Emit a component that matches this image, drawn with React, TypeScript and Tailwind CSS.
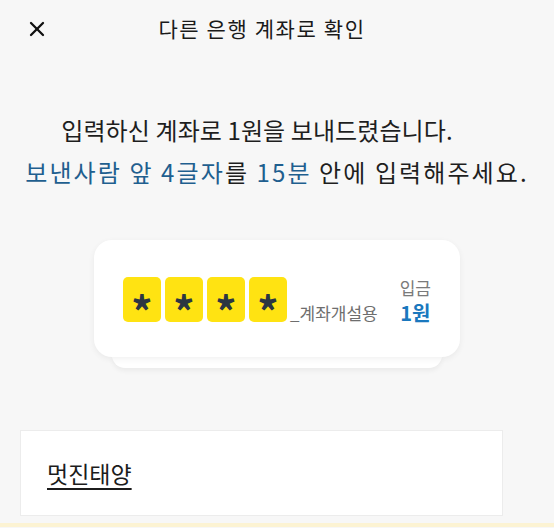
import { X } from "lucide-react";

const font = { fontFamily: '"Noto Sans CJK KR", "Noto Sans", sans-serif' };

const CodeBox = () => (
  <div className="w-[38px] h-[45px] rounded-[5px] bg-[#ffe312] flex items-center justify-center">
    <span className="block h-[24px] text-[42px] font-bold text-[#2c3642] leading-[44px]">*</span>
  </div>
);

export default function App() {
  return (
    <div className="w-[554px] h-[528px] overflow-hidden bg-[#f7f7f7] flex flex-col" style={font}>
      <header className="h-[58px] flex items-center pl-[25px] pr-[55px]">
        <button className="w-[24px] h-[24px] flex items-center justify-center text-[#111]">
          <X className="w-[26px] h-[26px]" strokeWidth={2.3} />
        </button>
        <h1 className="flex-1 text-center text-[21px] text-[#1a1a1a] tracking-[1.6px]">다른 은행 계좌로 확인</h1>
        <div className="w-[24px]" />
      </header>

      <div className="pt-[51px] text-center text-[24px] leading-[42px] text-[#1e1e1e]">
        <p className="tracking-[0.1px] pr-[40px]">입력하신 계좌로 1원을 보내드렸습니다.</p>
        <p className="tracking-[2.1px]">
          <span className="text-[#1f5f8f]">보낸사람 앞 4글자</span>를{" "}
          <span className="text-[#1f5f8f]">15분</span> 안에 입력해주세요.
        </p>
      </div>

      <div className="mt-[47px] w-[366px] mx-auto">
        <div className="relative z-10 h-[117px] rounded-[18px] bg-white shadow-[0_2px_6px_rgba(0,0,0,0.06)] flex items-center justify-between pl-[29px] pr-[29px]">
          <div className="flex items-end gap-[3px] mt-[2px]">
            <div className="flex gap-[4px]">
              <CodeBox />
              <CodeBox />
              <CodeBox />
              <CodeBox />
            </div>
            <span className="text-[17px] text-[#6e6e6e] leading-none mb-[1px]">_계좌개설용</span>
          </div>
          <div className="flex flex-col items-center mt-[4px]">
            <span className="text-[17px] text-[#7a7a7a] leading-[24px]">입금</span>
            <span className="text-[20px] font-bold text-[#1a78be] leading-[26px]">1원</span>
          </div>
        </div>
        <div className="mx-[18px] h-[13px] -mt-[2px] rounded-b-[14px] bg-white shadow-[0_3px_5px_rgba(0,0,0,0.05)]" />
      </div>

      <div className="mt-[62px] ml-[20px] w-[483px] h-[86px] bg-white border border-[#ececec] flex items-center pl-[26px]">
        <span className="text-[23px] text-[#1c1c1c] underline underline-offset-[5px] decoration-[1.5px]">멋진태양</span>
      </div>

      <div className="mt-[7px] h-[4px] bg-[#fcf3d3]" />
    </div>
  );
}
